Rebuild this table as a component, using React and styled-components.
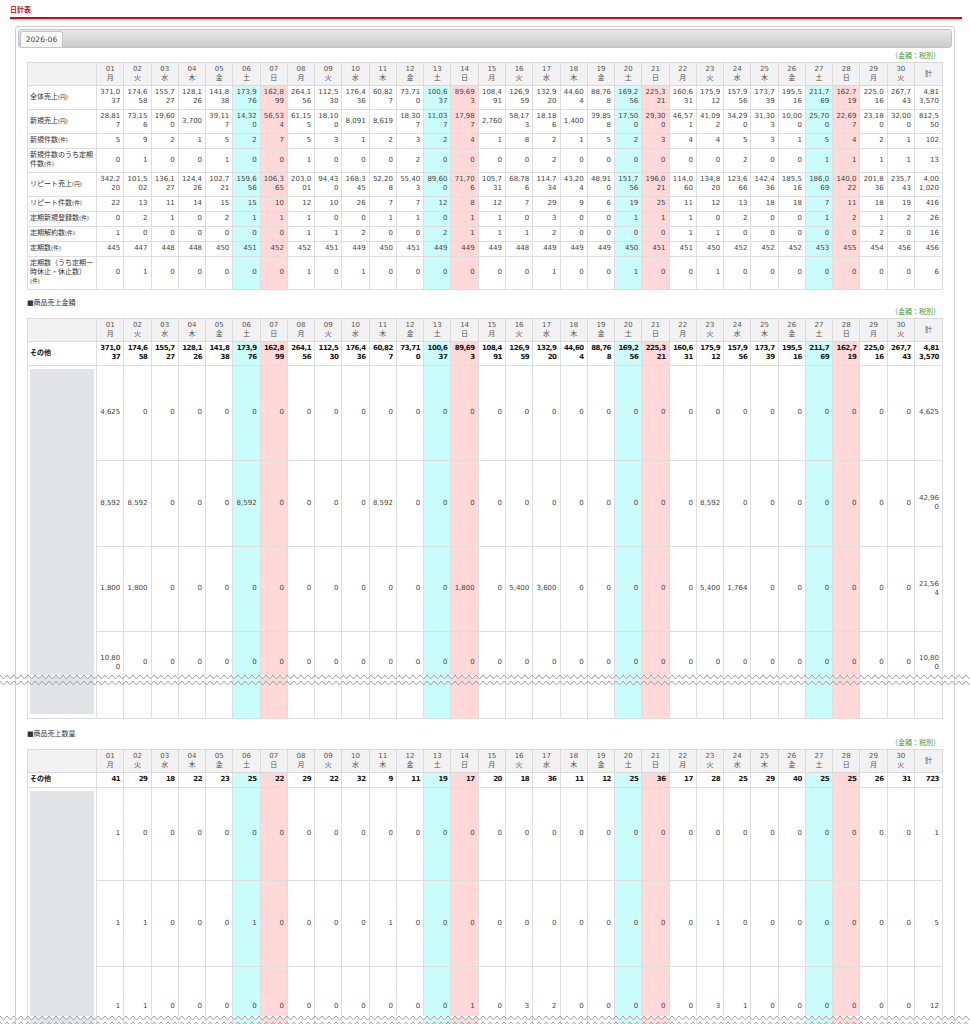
import React from 'react';
import styled, { createGlobalStyle } from 'styled-components';

const GlobalStyle = createGlobalStyle`
  html, body {
    margin: 0;
    padding: 0;
    background: #fff;
  }
  body {
    font-family: "DejaVu Sans", "Noto Sans CJK JP", sans-serif;
    color: #333;
  }
`;

const WEEK = ['月', '火', '水', '木', '金', '土', '日'];
const DAYS = Array.from({ length: 30 }, (_, i) => ({
  num: String(i + 1).padStart(2, '0'),
  wd: WEEK[i % 7],
  kind: i % 7 === 5 ? 'sat' : i % 7 === 6 ? 'sun' : null,
}));

const fmt = (n) => n.toLocaleString('en-US');
// 日付 -> 値 のマップから30日分の配列を作る
const sparse = (map) => DAYS.map((_, i) => map[i + 1] || 0);

const SUMMARY = [
  {
    label: '全体売上', unit: '(円)',
    values: [371037, 174658, 155727, 128126, 141838, 173976, 162899, 264156, 112530, 176436, 60827, 73710, 100637, 89693, 108491, 126959, 132920, 44604, 88768, 169256, 225321, 160631, 175912, 157956, 173739, 195516, 211769, 162719, 225016, 267743],
    total: 4813570,
  },
  {
    label: '新規売上', unit: '(円)',
    values: [28817, 73156, 19600, 3700, 39117, 14320, 56534, 61155, 18100, 8091, 8619, 18307, 11037, 17987, 2760, 58173, 18186, 1400, 39858, 17500, 29300, 46571, 41092, 34290, 31303, 10000, 25700, 22697, 23180, 32000],
    total: 812550,
  },
  {
    label: '新規件数', unit: '(件)',
    values: [5, 9, 2, 1, 5, 2, 7, 5, 3, 1, 2, 3, 2, 4, 1, 8, 2, 1, 5, 2, 3, 4, 4, 5, 3, 1, 5, 4, 2, 1],
    total: 102,
  },
  {
    label: '新規件数のうち定期件数', unit: '(件)',
    values: [0, 1, 0, 0, 1, 0, 0, 1, 0, 0, 0, 2, 0, 0, 0, 0, 2, 0, 0, 0, 0, 0, 0, 2, 0, 0, 1, 1, 1, 1],
    total: 13,
  },
  {
    label: 'リピート売上', unit: '(円)',
    values: [342220, 101502, 136127, 124426, 102721, 159656, 106365, 203001, 94430, 168345, 52208, 55403, 89600, 71706, 105731, 68786, 114734, 43204, 48910, 151756, 196021, 114060, 134820, 123666, 142436, 185516, 186069, 140022, 201836, 235743],
    total: 4001020,
  },
  {
    label: 'リピート件数', unit: '(件)',
    values: [22, 13, 11, 14, 15, 15, 10, 12, 10, 26, 7, 7, 12, 8, 12, 7, 29, 9, 6, 19, 25, 11, 12, 13, 18, 18, 7, 11, 18, 19],
    total: 416,
  },
  {
    label: '定期新規登録数', unit: '(件)',
    values: [0, 2, 1, 0, 2, 1, 1, 1, 0, 0, 1, 1, 0, 1, 1, 0, 3, 0, 0, 1, 1, 1, 0, 2, 0, 0, 1, 2, 1, 2],
    total: 26,
  },
  {
    label: '定期解約数', unit: '(件)',
    values: [1, 0, 0, 0, 0, 0, 0, 1, 1, 2, 0, 0, 2, 1, 1, 1, 2, 0, 0, 0, 0, 1, 1, 0, 0, 0, 0, 0, 2, 0],
    total: 16,
  },
  {
    label: '定期数', unit: '(件)',
    values: [445, 447, 448, 448, 450, 451, 452, 452, 451, 449, 450, 451, 449, 449, 449, 448, 449, 449, 449, 450, 451, 451, 450, 452, 452, 452, 453, 455, 454, 456],
    total: 456,
  },
  {
    label: '定期数（うち定期一時休止・休止数）', unit: '(件)',
    values: [0, 1, 0, 0, 0, 0, 0, 1, 0, 1, 0, 0, 0, 0, 0, 0, 1, 0, 0, 1, 0, 0, 1, 0, 0, 0, 0, 0, 0, 0],
    total: 6,
  },
];

const AMOUNT = {
  other: { values: SUMMARY[0].values, total: SUMMARY[0].total },
  items: [
    { height: 95, values: sparse({ 1: 4625 }), total: 4625 },
    { height: 86, values: sparse({ 1: 8592, 2: 8592, 6: 8592, 11: 8592, 23: 8592 }), total: 42960 },
    { height: 85, values: sparse({ 1: 1800, 2: 1800, 14: 1800, 16: 5400, 17: 3600, 23: 5400, 24: 1764 }), total: 21564 },
    { height: 87, values: sparse({ 1: 10800 }), total: 10800, lift: 24 },
  ],
};

const QUANTITY = {
  other: {
    values: [41, 29, 18, 22, 23, 25, 22, 29, 22, 32, 9, 11, 19, 17, 20, 18, 36, 11, 12, 25, 36, 17, 28, 25, 29, 40, 25, 25, 26, 31],
    total: 723,
  },
  items: [
    { height: 93, values: sparse({ 1: 1 }), total: 1 },
    { height: 86, values: sparse({ 1: 1, 2: 1, 6: 1, 11: 1, 23: 1 }), total: 5 },
    { height: 80, values: sparse({ 1: 1, 2: 1, 14: 1, 16: 3, 17: 2, 23: 3, 24: 1 }), total: 12 },
  ],
};

const Page = styled.div`
  position: relative;
  padding: 0 8px 0 10px;
  min-height: 1024px;
  overflow: hidden;
`;

const Title = styled.h1`
  margin: 0;
  padding-top: 5px;
  height: 12px;
  line-height: 10px;
  font-size: 7px;
  font-weight: bold;
  color: #d8000c;
  border-bottom: 2px solid #e3000f;
`;

const Panel = styled.div`
  margin: 7px 7px 0 5px;
  padding: 2px;
  border: 1px solid #cfcfcf;
  border-radius: 3px;
  background: #fff;
  min-height: 1000px;
`;

const TabBar = styled.div`
  display: flex;
  align-items: flex-end;
  height: 16px;
  padding: 1px 0 0 1px;
  border: 1px solid #c4c4c4;
  border-radius: 3px;
  background: linear-gradient(#e8e8e8, #cbcbcb);
`;

const Tab = styled.div`
  width: 41px;
  height: 15px;
  line-height: 15px;
  border: 1px solid #c4c4c4;
  border-bottom: none;
  border-radius: 3px 3px 0 0;
  background: linear-gradient(#ffffff, #f3f3f3);
  font-size: 7.5px;
  color: #444;
  text-align: center;
`;

const Content = styled.div`
  padding: 4px 9px 0 9px;
`;

const SectionTitle = styled.div`
  margin-top: ${(p) => p.$gap}px;
  font-size: 7px;
  line-height: 9px;
  color: #333;
`;

const Note = styled.div`
  padding-right: 3px;
  font-size: 7px;
  line-height: 9px;
  color: #3a9b3a;
  text-align: right;
  margin-bottom: 1px;
`;

const Table = styled.table`
  width: 100%;
  border-collapse: collapse;
  table-layout: fixed;
  font-size: 7px;
  line-height: 9px;
  border: 1px solid #d6d6d6;
`;

const LabelCol = styled.col`
  width: 69px;
`;

const TotalCol = styled.col`
  width: 28px;
`;

const HeadCell = styled.th`
  padding: 2px 0;
  border: 1px solid #dadada;
  background: #f2f2f2;
  font-weight: normal;
  color: #555;
  text-align: center;
  vertical-align: middle;
`;

const BG = { sat: '#cbfcfc', sun: '#ffd8d8' };

const NumCell = styled.td`
  padding: 2px 3px ${(p) => 3 + (p.$lift || 0)}px 2px;
  border: 1px solid #dedede;
  background: ${(p) => BG[p.$kind] || '#fff'};
  color: ${(p) => (p.$bold ? '#111' : '#444')};
  font-weight: ${(p) => (p.$bold ? 'bold' : 'normal')};
  letter-spacing: ${(p) => (p.$bold ? '-0.45px' : '0')};
  text-align: right;
  vertical-align: middle;
  word-break: break-all;
`;

const LabelCell = styled.td`
  padding: 2px 2px 3px;
  border: 1px solid #dedede;
  color: ${(p) => (p.$bold ? '#111' : '#333')};
  font-weight: ${(p) => (p.$bold ? 'bold' : 'normal')};
  text-align: left;
  vertical-align: middle;
`;

const Unit = styled.span`
  font-size: 5.5px;
  line-height: 0;
`;

const ThumbCell = styled.td`
  padding: 3px 2px;
  border: 1px solid #dedede;
  vertical-align: top;
`;

const Thumb = styled.div`
  height: ${(p) => p.$h}px;
  background: #e3e4e8;
`;

const ItemRow = styled.tr`
  height: ${(p) => p.$h}px;
`;

const TearWrap = styled.div`
  position: absolute;
  left: 0;
  width: 100%;
  top: ${(p) => p.$top}px;
  height: 14px;
  pointer-events: none;

  svg {
    display: block;
  }
`;

const zig = (y, amp, width, step) => {
  const pts = [];
  for (let x = 0, i = 0; x <= width + step; x += step / 2, i++) {
    pts.push([x, i % 2 ? y + amp : y]);
  }
  return pts;
};

const Tear = ({ top }) => {
  const upper = zig(1, 4, 980, 7);
  const lower = zig(7, 4, 980, 7);
  const line = (pts) => pts.map(([x, y]) => `${x},${y}`).join(' ');
  const band = `M${line(upper)} L${line([...lower].reverse())} Z`;
  return (
    <TearWrap $top={top}>
      <svg width="100%" height="14" viewBox="0 0 970 14" preserveAspectRatio="none">
        <path d={band.replace(/ /g, ' L')} fill="#fff" />
        <polyline points={line(upper)} fill="none" stroke="#a0a0a0" strokeWidth="1" />
        <polyline points={line(lower)} fill="none" stroke="#a0a0a0" strokeWidth="1" />
      </svg>
    </TearWrap>
  );
};

const HeaderRow = () => (
  <thead>
    <tr>
      <HeadCell />
      {DAYS.map((d) => (
        <HeadCell key={d.num}>
          {d.num}
          <br />
          {d.wd}
        </HeadCell>
      ))}
      <HeadCell>計</HeadCell>
    </tr>
  </thead>
);

const Cols = () => (
  <colgroup>
    <LabelCol />
    {DAYS.map((d) => (
      <col key={d.num} />
    ))}
    <TotalCol />
  </colgroup>
);

const ValueCells = ({ values, total, bold, lift }) => (
  <>
    {values.map((v, i) => (
      <NumCell key={i} $kind={DAYS[i].kind} $bold={bold} $lift={lift}>
        {fmt(v)}
      </NumCell>
    ))}
    <NumCell $bold={bold} $lift={lift}>{fmt(total)}</NumCell>
  </>
);

const SummaryTable = () => (
  <Table>
    <Cols />
    <HeaderRow />
    <tbody>
      {SUMMARY.map((row) => (
        <tr key={row.label}>
          <LabelCell>
            {row.label}
            <Unit>{row.unit}</Unit>
          </LabelCell>
          <ValueCells values={row.values} total={row.total} />
        </tr>
      ))}
    </tbody>
  </Table>
);

const ProductTable = ({ data }) => {
  const thumbH = data.items.reduce((s, it) => s + it.height, 0) - 8;
  return (
    <Table>
      <Cols />
      <HeaderRow />
      <tbody>
        <tr>
          <LabelCell $bold>その他</LabelCell>
          <ValueCells values={data.other.values} total={data.other.total} bold />
        </tr>
        {data.items.map((it, idx) => (
          <ItemRow key={idx} $h={it.height}>
            {idx === 0 && (
              <ThumbCell rowSpan={data.items.length}>
                <Thumb $h={thumbH} />
              </ThumbCell>
            )}
            <ValueCells values={it.values} total={it.total} lift={it.lift} />
          </ItemRow>
        ))}
      </tbody>
    </Table>
  );
};

const App = () => (
  <Page>
    <GlobalStyle />
    <Title>日計表</Title>
    <Panel>
      <TabBar>
        <Tab>2026-06</Tab>
      </TabBar>
      <Content>
        <Note>（金額：税別）</Note>
        <SummaryTable />

        <SectionTitle $gap={9}>■商品売上金額</SectionTitle>
        <Note>（金額：税別）</Note>
        <ProductTable data={AMOUNT} />

        <SectionTitle $gap={11}>■商品売上数量</SectionTitle>
        <Note>（金額：税別）</Note>
        <ProductTable data={QUANTITY} />
      </Content>
    </Panel>
    <Tear top={674} />
    <Tear top={1015} />
  </Page>
);

export default App;
